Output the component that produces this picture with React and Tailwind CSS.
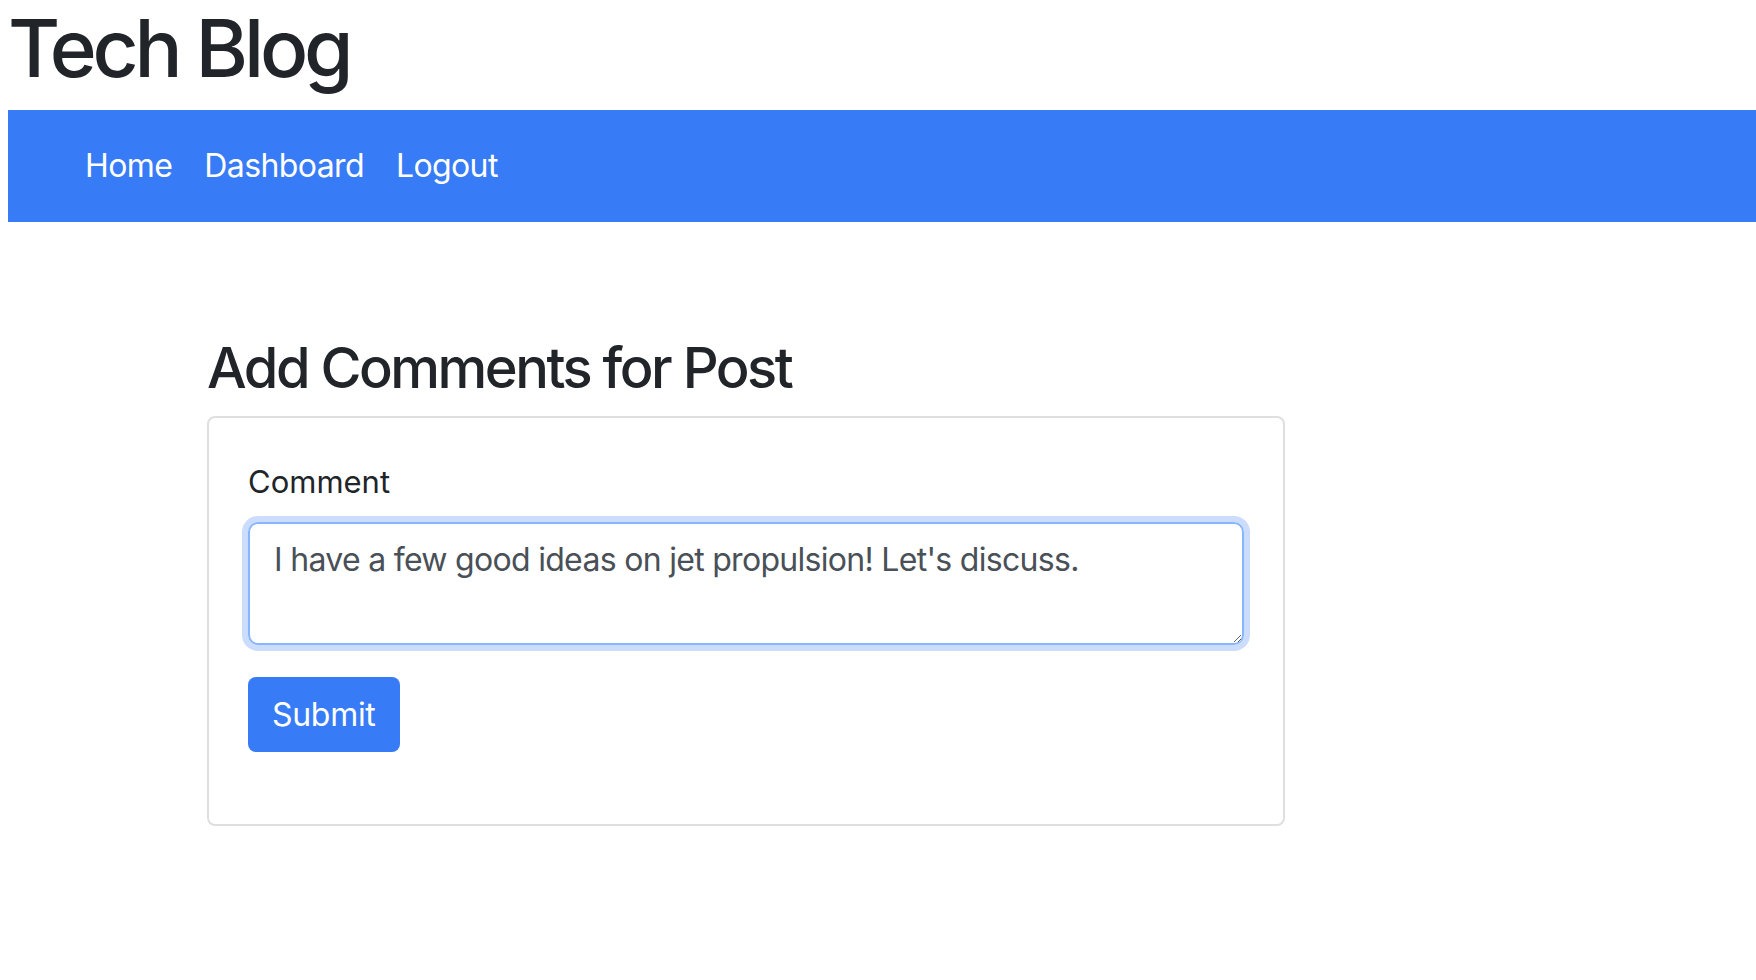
export default function App() {
  return (
    <div className="min-h-[980px] bg-white text-[#212529]" style={{ fontFamily: 'Inter, "Noto Sans", sans-serif' }}>
      <h1 className="ml-2 text-[80px] font-medium leading-[96px] tracking-[-4.2px] text-[#212529] mb-[14px]">Tech Blog</h1>
      <nav className="ml-2 h-[112px] bg-[#387bf6] flex items-center pl-[61px]">
        <a className="px-4 text-[32px] leading-[48px] tracking-[-0.6px] text-white">Home</a>
        <a className="px-4 text-[32px] leading-[48px] tracking-[-0.6px] text-white">Dashboard</a>
        <a className="px-4 text-[32px] leading-[48px] tracking-[-0.6px] text-white">Logout</a>
      </nav>
      <div className="ml-[207px] w-[1078px] pt-[113px]">
        <h3 className="text-[56px] font-medium leading-[67px] mb-[14px] text-[#212529] tracking-[-2.5px]">Add Comments for Post</h3>
        <div className="border-2 border-[#dfdfdf] rounded-[8px] px-[39px] pt-[40px] pb-[40px]">
          <label className="block text-[31px] leading-[48px] mb-[16px] text-[#212529]">Comment</label>
          <textarea
            className="block w-full h-[123px] border-2 border-[#86b7fe] rounded-[10px] px-[24px] py-[12px] text-[32px] leading-[48px] tracking-[-0.7px] text-[#495057] shadow-[0_0_0_6px_#cbdcfd] outline-none"
            defaultValue="I have a few good ideas on jet propulsion! Let's discuss."
            style={{ fontFamily: 'Inter, "Noto Sans", sans-serif' }}
          />
          <button className="mt-[32px] mb-[32px] h-[75px] px-[24px] rounded-[8px] bg-[#387bf6] text-white text-[32px] leading-[48px] tracking-[-0.3px]" style={{ fontFamily: 'Inter, "Noto Sans", sans-serif' }}>Submit</button>
        </div>
      </div>
    </div>
  );
}
